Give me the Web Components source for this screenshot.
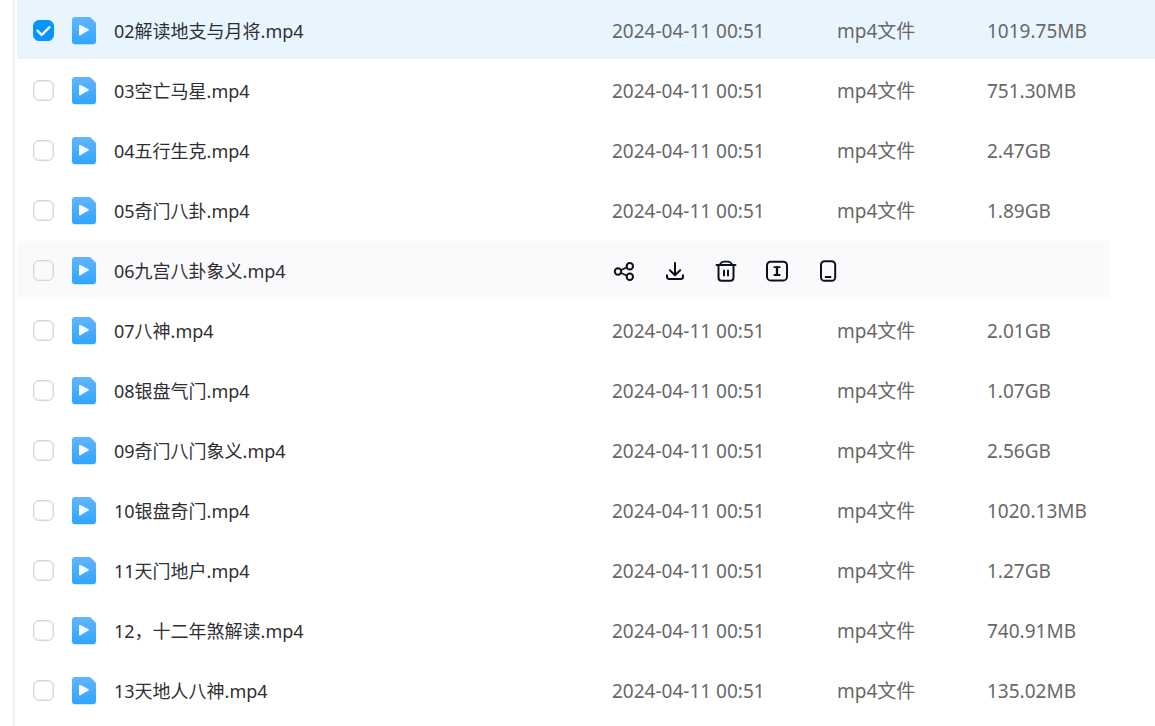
<!DOCTYPE html>
<html lang="zh-CN">
<head>
<meta charset="utf-8">
<meta name="viewport" content="width=device-width, initial-scale=1">
<title>文件列表</title>
<style>
body { margin: 0; background: #fff; font-family: "Noto Sans", "Noto Sans CJK SC", sans-serif; }
</style>
</head>
<body>
<file-list></file-list>
<script>
// Blue document with a play triangle
class VideoFileIcon extends HTMLElement {
  constructor() {
    super();
    this.attachShadow({ mode: 'open' }).innerHTML = `
      <style>:host { display: block; flex: none; width: 24px; height: 28px } svg { display: block }</style>
      <svg width="24" height="28" viewBox="0 0 24 28" aria-hidden="true">
        <defs>
          <linearGradient id="paper" x1="0" y1="0" x2="0" y2="1"><stop stop-color="#62b5ff"/><stop offset="1" stop-color="#2fa5ff"/></linearGradient>
          <linearGradient id="play" x1="0" y1="0" x2="1" y2="0"><stop stop-color="#fff"/><stop offset="1" stop-color="#e3f2ff"/></linearGradient>
        </defs>
        <path fill="url(#paper)" d="M3 0h14.300q.8 0 1.400.6l4.700 4.700q.6.600.6 1.400V24.300q0 3-3 3H3q-3 0-3-3V3q0-3 3-3z"/>
        <path fill="url(#play)" d="M7 8.900q0-1.500 1.400-.8l8 4q1.300.700 0 1.500l-8 4.600q-1.400.7-1.400-.8z"/>
      </svg>`;
  }
}
customElements.define('video-file-icon', VideoFileIcon);

class RowCheck extends HTMLElement {
  constructor() {
    super();
    this.attachShadow({ mode: 'open' }).innerHTML = `
      <style>
        :host { display: grid; width: 21px; height: 21px }
        input { appearance: none; grid-area: 1/1; width: 21px; height: 21px; margin: 0; box-sizing: border-box; border: 1px solid #d5d5d8; border-radius: 6px; box-shadow: inset 0 0 0 1px #eeeef0 }
        input:checked { background: #0695ff; border-color: #0695ff; box-shadow: none }
        svg { grid-area: 1/1; pointer-events: none; visibility: hidden; z-index: 1 }
        input:checked + svg { visibility: visible }
      </style>
      <input type="checkbox">
      <svg width="21" height="21" viewBox="0 0 21 21" fill="none" stroke="#fff" stroke-width="2.400" stroke-linecap="round" stroke-linejoin="round" aria-hidden="true"><path d="M4.500 10.700 8.700 15 16.500 7.200"/></svg>`;
    const input = this.shadowRoot.querySelector('input');
    input.checked = this.hasAttribute('checked');
    input.setAttribute('aria-label', '选择 ' + this.getAttribute('label'));
  }
}
customElements.define('row-check', RowCheck);

const ACTIONS = {
  '分享': '<circle cx="6" cy="12.500" r="3.200"/><circle cx="17.800" cy="7.300" r="3.200"/><circle cx="17.800" cy="17.800" r="3.200"/><path stroke-width="1.600" d="m9 11 5.800-2.500M9 14l5.800 2.600"/>',
  '下载': '<path d="M12 4v12M6.800 11.300 12 16.300l5.200-5M4 16.300v1.500q0 2.200 2.200 2.200h11.600q2.200 0 2.200-2.200v-1.500"/>',
  '删除': '<path d="M4.500 6.500v12q0 3.200 3.200 3.200h8.600q3.200 0 3.200-3.200v-12M10 11.500v5M14 11.500v5"/><path stroke-width="1.800" d="M2.500 6h19M5.500 5.800l1.700-1.900Q8 2.600 10 2.600h4q2 0 2.800 1.300l1.700 1.900"/>',
  '重命名': '<rect x="2" y="2.700" width="20" height="18.800" rx="3.800"/><path stroke-width="1.800" d="M9.300 8.200h5.400M9.300 16h5.400"/><path stroke-width="2.300" d="M12 8.200V16"/>',
  '发送到手机': '<rect x="5" y="2.200" width="14.200" height="19.600" rx="3.600"/><path d="M9.700 18h4.800"/>'
};
class FileAction extends HTMLElement {
  constructor() {
    super();
    const label = this.getAttribute('label');
    this.attachShadow({ mode: 'open' }).innerHTML = `
      <style>
        :host { display: block; width: 24px; height: 24px }
        button { display: block; padding: 0; border: 0; background: none; color: #0b1120; cursor: pointer }
        svg { display: block }
      </style>
      <button type="button" aria-label="${label}">
        <svg width="24" height="24" viewBox="0 0 24 24" fill="none" stroke="currentColor" stroke-width="2" stroke-linecap="round" stroke-linejoin="round" aria-hidden="true">${ACTIONS[label]}</svg>
      </button>`;
  }
}
customElements.define('file-action', FileAction);

const FILES = [
  ['02解读地支与月将.mp4', '1019.75MB', 'selected'],
  ['03空亡马星.mp4', '751.30MB'],
  ['04五行生克.mp4', '2.47GB'],
  ['05奇门八卦.mp4', '1.89GB'],
  ['06九宫八卦象义.mp4', '', 'active'],
  ['07八神.mp4', '2.01GB'],
  ['08银盘气门.mp4', '1.07GB'],
  ['09奇门八门象义.mp4', '2.56GB'],
  ['10银盘奇门.mp4', '1020.13MB'],
  ['11天门地户.mp4', '1.27GB'],
  ['12，十二年煞解读.mp4', '740.91MB'],
  ['13天地人八神.mp4', '135.02MB']
];
class FileList extends HTMLElement {
  constructor() {
    super();
    const rows = FILES.map(([name, size, state = '']) => `
      <tr class="${state}">
        <td class="pick"><row-check label="${name}" ${state === 'selected' ? 'checked' : ''}></row-check></td>
        <td><div class="name"><video-file-icon></video-file-icon><span>${name}</span></div></td>
        ${state === 'active'
          ? `<td colspan="3"><div class="actions">${Object.keys(ACTIONS).map(a => `<file-action label="${a}"></file-action>`).join('')}</div></td>`
          : `<td>2024-04-11 00:51</td><td>mp4文件</td><td>${size}</td>`}
        <td class="gutter"></td>
      </tr>`).join('');
    this.attachShadow({ mode: 'open' }).innerHTML = `
      <style>
        :host { display: block; box-sizing: border-box; min-height: 100vh; margin-left: 13px; padding-left: 2px; border-left: 2px solid #f0f0f1 }
        table { width: 100%; table-layout: fixed; border-spacing: 0; border-top: 1px solid #f1f1f3; color: #686868; font-size: 19px; line-height: 28px }
        .c-pick { width: 55px } .c-date { width: 225px } .c-type { width: 150px } .c-size { width: 123px } .c-gutter { width: 45px }
        td { box-sizing: border-box; height: 60px; padding: 2px 0 0; border-bottom: 2px solid transparent; background-clip: padding-box; white-space: nowrap }
        .pick { padding: 0 0 0 16px }
        .name { display: flex; align-items: center; gap: 18px; color: #2f2f33; font-size: 18px }
        .name span { overflow: hidden; text-overflow: ellipsis }
        .actions { display: flex; gap: 27px }
        .selected td { background-color: #e8f5ff }
        .active td:not(.gutter) { background-color: #fafafc }
      </style>
      <table aria-label="文件列表">
        <colgroup><col class="c-pick"><col><col class="c-date"><col class="c-type"><col class="c-size"><col class="c-gutter"></colgroup>
        <tbody>${rows}</tbody>
      </table>`;
  }
}
customElements.define('file-list', FileList);
</script>
</body>
</html>
